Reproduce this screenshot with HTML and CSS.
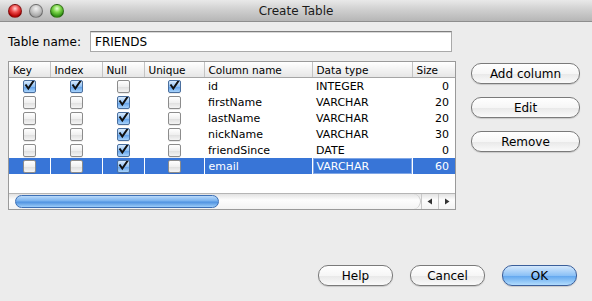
FILE: index.html
```html
<!DOCTYPE html>
<html lang="en">
<head>
  <meta charset="utf-8" />
  <title>Create Table</title>
  <link rel="stylesheet" href="styles.css">
</head>
<body>

<div class="window">
  <div class="titlebar">
    <div class="lights">
      <span class="light red"></span>
      <span class="light gray"></span>
      <span class="light green"></span>
    </div>
    <div class="title">Create Table</div>
    <div></div>
  </div>

  <div class="content">
    <div class="name-row">
      <label>Table name:</label>
      <div class="field">FRIENDS</div>
    </div>

    <div class="main">
      <div class="tablebox">
        <table class="grid">
          <colgroup>
            <col class="c-key"><col class="c-index"><col class="c-null"><col class="c-unique">
            <col class="c-name"><col class="c-type"><col class="c-size">
          </colgroup>
          <thead>
            <tr><th>Key</th><th>Index</th><th>Null</th><th>Unique</th><th>Column name</th><th>Data type</th><th>Size</th></tr>
          </thead>
          <tbody>
            <tr>
              <td class="chk"><span class="cb on"></span></td>
              <td class="chk"><span class="cb on"></span></td>
              <td class="chk"><span class="cb"></span></td>
              <td class="chk"><span class="cb on"></span></td>
              <td>id</td><td>INTEGER</td><td class="num">0</td>
            </tr>
            <tr>
              <td class="chk"><span class="cb"></span></td>
              <td class="chk"><span class="cb"></span></td>
              <td class="chk"><span class="cb on"></span></td>
              <td class="chk"><span class="cb"></span></td>
              <td>firstName</td><td>VARCHAR</td><td class="num">20</td>
            </tr>
            <tr>
              <td class="chk"><span class="cb"></span></td>
              <td class="chk"><span class="cb"></span></td>
              <td class="chk"><span class="cb on"></span></td>
              <td class="chk"><span class="cb"></span></td>
              <td>lastName</td><td>VARCHAR</td><td class="num">20</td>
            </tr>
            <tr>
              <td class="chk"><span class="cb"></span></td>
              <td class="chk"><span class="cb"></span></td>
              <td class="chk"><span class="cb on"></span></td>
              <td class="chk"><span class="cb"></span></td>
              <td>nickName</td><td>VARCHAR</td><td class="num">30</td>
            </tr>
            <tr>
              <td class="chk"><span class="cb"></span></td>
              <td class="chk"><span class="cb"></span></td>
              <td class="chk"><span class="cb on"></span></td>
              <td class="chk"><span class="cb"></span></td>
              <td>friendSince</td><td>DATE</td><td class="num">0</td>
            </tr>
            <tr class="selected">
              <td class="chk"><span class="cb"></span></td>
              <td class="chk"><span class="cb"></span></td>
              <td class="chk"><span class="cb on"></span></td>
              <td class="chk"><span class="cb"></span></td>
              <td>email</td><td class="focus">VARCHAR</td><td class="num">60</td>
            </tr>
          </tbody>
        </table>

        <div class="hscroll">
          <div class="track"><div class="thumb"></div></div>
          <div class="arrow">
            <svg width="6" height="7" viewBox="0 0 6 7"><path d="M5 0.5 L0.5 3.5 L5 6.5 Z" fill="#333"/></svg>
          </div>
          <div class="arrow">
            <svg width="6" height="7" viewBox="0 0 6 7"><path d="M1 0.5 L5.5 3.5 L1 6.5 Z" fill="#333"/></svg>
          </div>
        </div>
      </div>

      <div class="side">
        <button class="btn">Add column</button>
        <button class="btn">Edit</button>
        <button class="btn">Remove</button>
      </div>
    </div>

    <div class="footer">
      <button class="btn">Help</button>
      <button class="btn">Cancel</button>
      <button class="btn default">OK</button>
    </div>
  </div>
</div>

</body>
</html>
```

FILE: styles.css
```css
body {
  margin: 0;
  font-family: "DejaVu Sans", sans-serif;
  font-size: 12px;
  color: #000;
}

.window {
  width: 592px;
  height: 301px;
  background-color: #ececec;
  display: flex;
  flex-direction: column;
  overflow: hidden;
}

/* title bar */
.titlebar {
  height: 22px;
  display: grid;
  grid-template-columns: 1fr auto 1fr;
  align-items: center;
  background: linear-gradient(#e9e9e9, #d0d0d0 45%, #b6b6b6);
  border-bottom: 1px solid #8e8e8e;
  box-sizing: border-box;
}

.lights {
  display: flex;
  gap: 7px;
  padding-left: 8px;
}

.light {
  width: 14px;
  height: 14px;
  border-radius: 50%;
  box-sizing: border-box;
  border: 1px solid rgba(0, 0, 0, 0.35);
}

.light.red {
  background: radial-gradient(circle at 50% 30%, #ffd6d6 0, #f05050 35%, #b40000 75%, #e24a4a 100%);
}

.light.gray {
  background: radial-gradient(circle at 50% 30%, #f2f2f2 0, #c9c9c9 40%, #9e9e9e 80%, #c2c2c2 100%);
}

.light.green {
  background: radial-gradient(circle at 50% 30%, #e6ffd6 0, #7fd84c 35%, #2f8f12 75%, #6cc844 100%);
}

.title {
  font-size: 12px;
  color: #1a1a1a;
}

/* content */
.content {
  flex: 1;
  display: flex;
  flex-direction: column;
  padding: 9px 15px 15px 8px;
}

.name-row {
  display: flex;
  align-items: center;
  height: 21px;
}

.name-row label {
  width: 82px;
}

.field {
  width: 362px;
  height: 21px;
  box-sizing: border-box;
  background: #fff;
  border: 1px solid #a9a9a9;
  border-top-color: #7e7e7e;
  box-shadow: inset 0 1px 0 #d8d8d8;
  padding: 2px 4px;
  line-height: 16px;
}

.main {
  display: flex;
  gap: 15px;
  margin-top: 9px;
}

/* table */
.tablebox {
  width: 448px;
  height: 149px;
  box-sizing: border-box;
  border: 1px solid #9a9a9a;
  background: #fff;
  display: flex;
  flex-direction: column;
  justify-content: space-between;
}

.grid {
  border-collapse: collapse;
  table-layout: fixed;
  width: 446px;
  font-size: 11px;
}

.c-key { width: 41px; }
.c-index { width: 52px; }
.c-null { width: 42px; }
.c-unique { width: 60px; }
.c-name { width: 108px; }
.c-type { width: 100px; }

.grid th {
  height: 15px;
  padding: 0 4px;
  text-align: left;
  font-weight: normal;
  font-size: 10.5px;
  background: linear-gradient(#ffffff, #f2f2f2 50%, #e6e6e6);
  border-right: 1px solid #c4c4c4;
  border-bottom: 1px solid #a5a5a5;
  white-space: nowrap;
  overflow: hidden;
}

.grid th:last-child {
  border-right: 0;
}

.grid td {
  height: 16px;
  padding: 0 4px;
  white-space: nowrap;
  overflow: hidden;
}

.grid td.chk {
  text-align: center;
  padding: 0;
  line-height: 0;
}

.grid td.num {
  text-align: right;
  padding-right: 6px;
}

.grid tr.selected td {
  background: #3875d7;
  color: #fff;
  border-right: 1px solid #fff;
}

.grid tr.selected td:last-child {
  border-right: 0;
}

.grid tr.selected td.focus {
  box-shadow: inset 0 0 0 1px #7fa6e6;
}

/* checkboxes */
.cb {
  display: inline-block;
  width: 13px;
  height: 13px;
  box-sizing: border-box;
  border: 1px solid #8c8c8c;
  border-radius: 2px;
  background: linear-gradient(#ffffff, #f0f0f0 50%, #dedede 51%, #f4f4f4);
  box-shadow: 0 1px 0 rgba(0, 0, 0, 0.08);
  vertical-align: middle;
}

.cb.on {
  border-color: #4a6f9e;
  background:
    url("data:image/svg+xml;utf8,<svg xmlns='http://www.w3.org/2000/svg' width='13' height='13' viewBox='0 0 13 13'><path d='M2.5 5.5 L5.3 9.5 L11.5 0.5' fill='none' stroke='%23111' stroke-width='2'/></svg>") no-repeat -1px -2px,
    linear-gradient(#d9ebfd, #8fc0f4 50%, #5c9de8 51%, #a8d3fb);
}

/* horizontal scroll bar */
.hscroll {
  height: 15px;
  display: flex;
  border-top: 1px solid #b5b5b5;
  background: linear-gradient(#e2e2e2, #fdfdfd 40%, #f3f3f3);
}

.track {
  flex: 1;
  padding: 1px 0 1px 6px;
  border-right: 1px solid #c8c8c8;
  border-radius: 0 8px 8px 0;
}

.thumb {
  width: 204px;
  height: 13px;
  box-sizing: border-box;
  border-radius: 7px;
  border: 1px solid #3c6fb5;
  background: linear-gradient(#b9d9fa, #79b2ee 45%, #4f92e0 55%, #9ccdf9);
}

.arrow {
  width: 16px;
  display: flex;
  align-items: center;
  justify-content: center;
  border-left: 1px solid #c8c8c8;
}

/* buttons */
.side {
  display: flex;
  flex-direction: column;
  gap: 13px;
  margin-top: 2px;
}

.btn {
  height: 21px;
  box-sizing: border-box;
  border: 1px solid #7a7a7a;
  border-radius: 10px;
  background: linear-gradient(#ffffff, #f6f6f6 50%, #e8e8e8 51%, #fafafa);
  box-shadow: 0 1px 1px rgba(0, 0, 0, 0.15);
  font-family: "DejaVu Sans", sans-serif;
  font-size: 12px;
  color: #000;
  padding: 0;
}

.side .btn {
  width: 109px;
}

.footer {
  margin-top: auto;
  display: flex;
  justify-content: flex-end;
  gap: 17px;
}

.footer .btn {
  width: 75px;
}

.btn.default {
  border-color: #3b5f9b;
  background: linear-gradient(#d4e8fc, #8cc1f6 50%, #5fa5ee 51%, #b2dcfd);
}
```
